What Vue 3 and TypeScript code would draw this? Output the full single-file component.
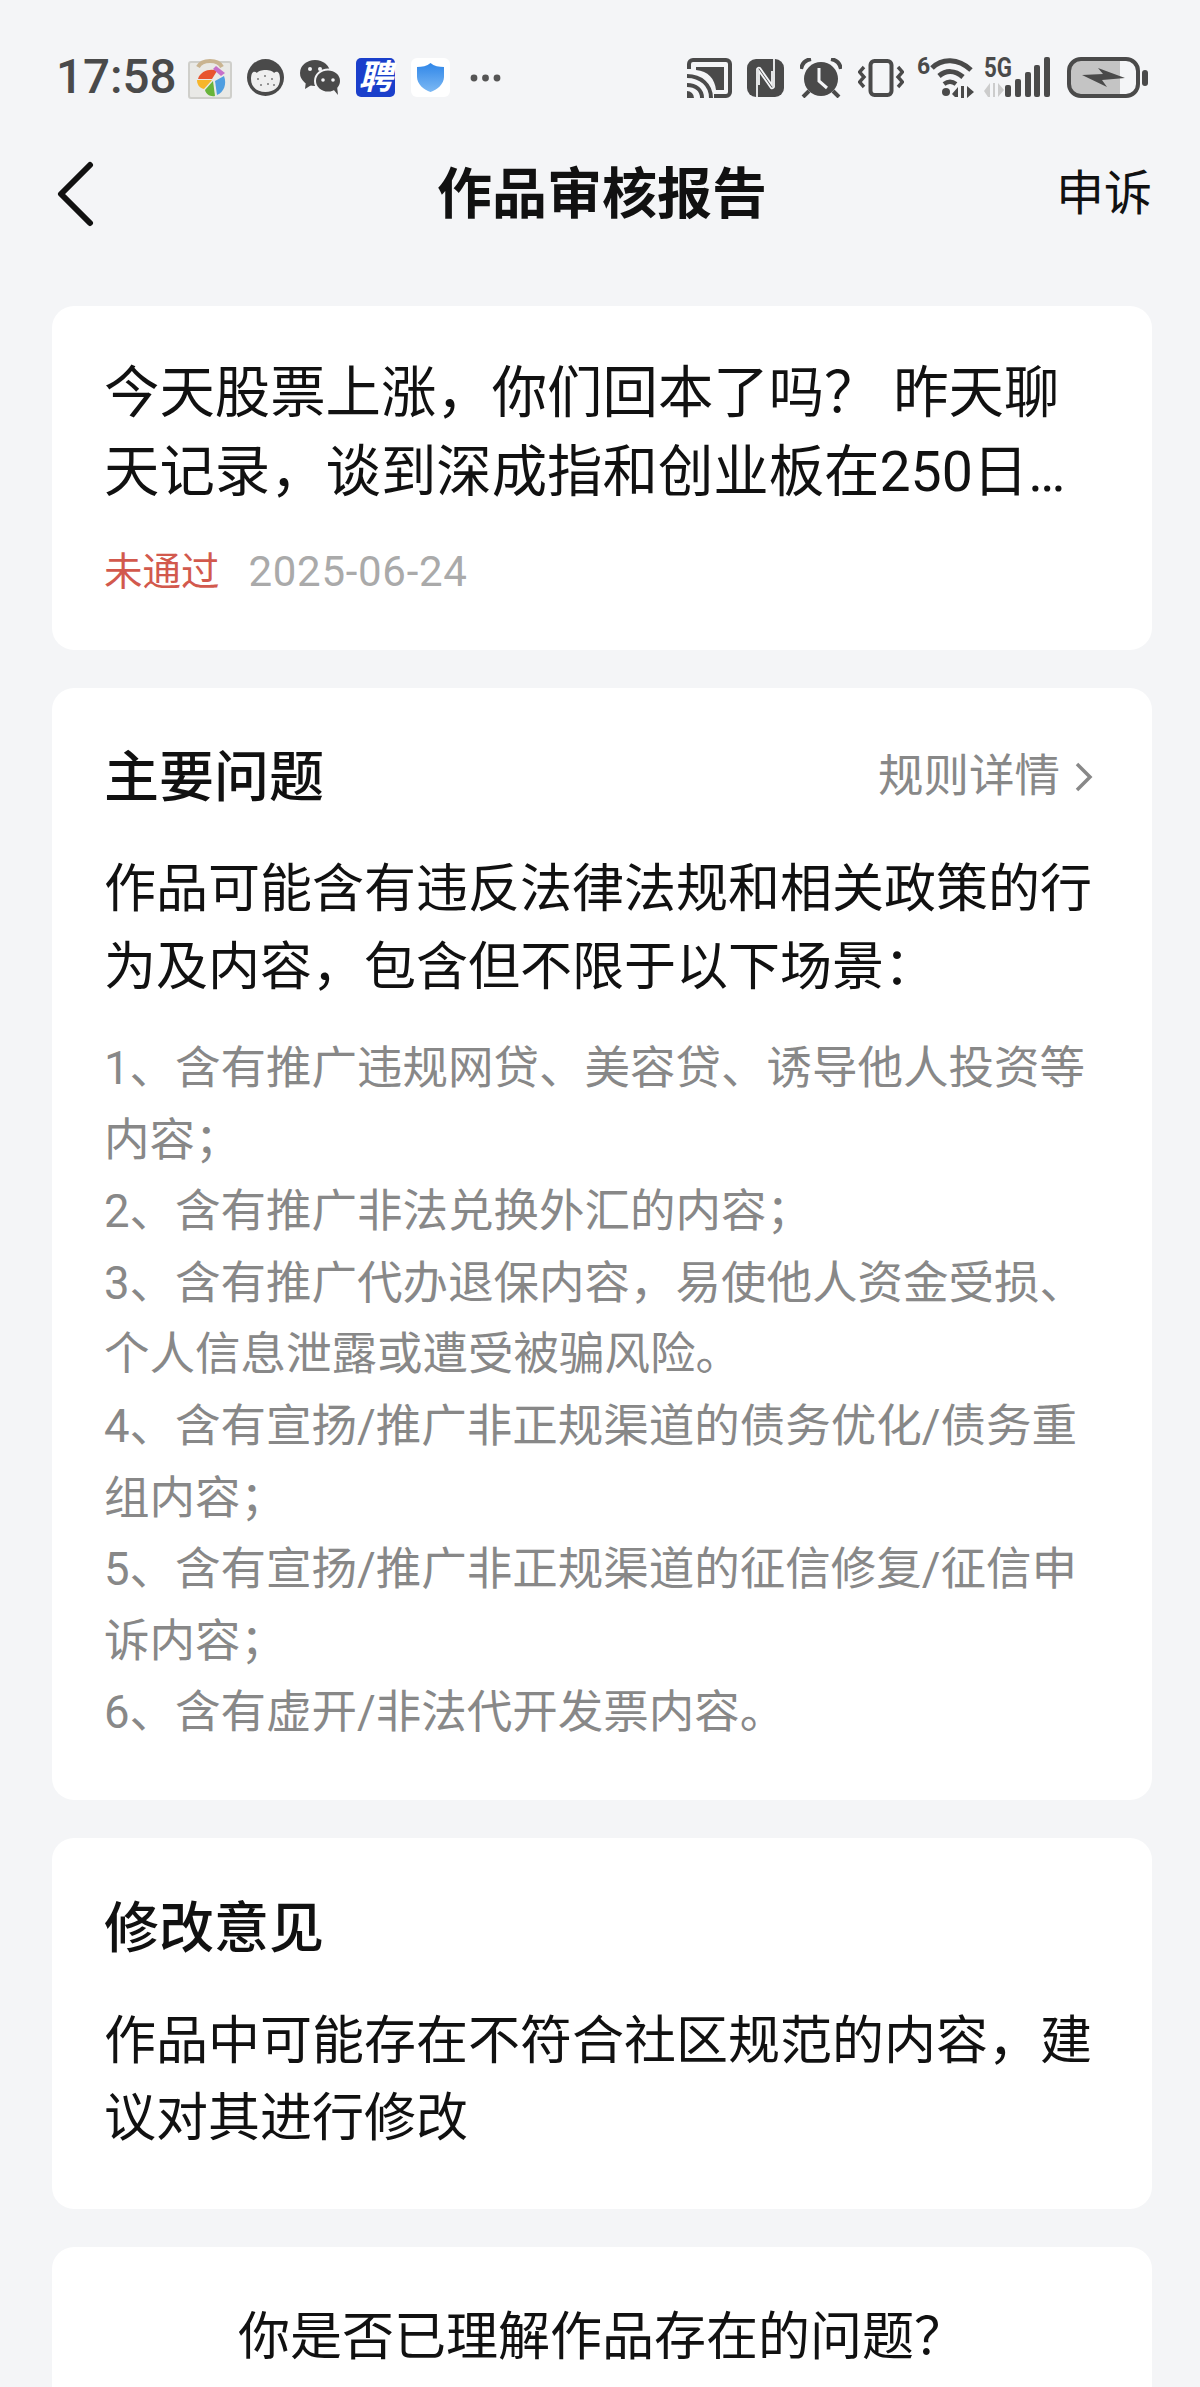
<script setup lang="ts">
// full-width punctuation is written as escapes so it survives as U+FF0C etc.
const rules = [
  '1、含有推广违规网贷、美容贷、诱导他人投资等内容\uFF1B',
  '2、含有推广非法兑换外汇的内容\uFF1B',
  '3、含有推广代办退保内容\uFF0C易使他人资金受损、个人信息泄露或遭受被骗风险。',
  '4、含有宣扬/推广非正规渠道的债务优化/债务重组内容\uFF1B',
  '5、含有宣扬/推广非正规渠道的征信修复/征信申诉内容\uFF1B',
  '6、含有虚开/非法代开发票内容。',
]
const workTitle = '今天股票上涨\uFF0C你们回本了吗\uFF1F 昨天聊天记录\uFF0C谈到深成指和创业板在250日…'
const issueIntro = '作品可能含有违反法律法规和相关政策的行为及内容\uFF0C包含但不限于以下场景\uFF1A'
const advice = '作品中可能存在不符合社区规范的内容\uFF0C建议对其进行修改'
const question = '你是否已理解作品存在的问题\uFF1F'
</script>

<template>
  <div class="page">
    <div class="status">
      <div class="status__left">
        <span class="status__time">17:58</span>
        <svg class="ic-bag" width="44" height="43" viewBox="0 0 44 43">
          <rect x="1" y="6" width="42" height="36" rx="2" fill="#e9e9e6" stroke="#cfcfcb" stroke-width="2" />
          <path d="M10 11 C14 3 30 3 34 11" fill="none" stroke="#c9b491" stroke-width="4" />
          <path d="M10 23 C12 15 23 12 29 15 L24 23Z" fill="#e8542f" />
          <path d="M9 24 L24 24 L16 33 C11 32 9 28 9 24Z" fill="#f6b52a" />
          <path d="M17 34 L25 25 L27 40 C22 41 18 38 17 34Z" fill="#68b43a" />
          <path d="M29 39 L27 25 L36 20 C39 28 36 36 29 39Z" fill="#4f9ee0" />
          <path d="M25 13 L33 20 L37 17 L28 10Z" fill="#c66fc9" />
        </svg>
        <svg class="ic-face" width="37" height="37" viewBox="0 0 37 37">
          <circle cx="18.5" cy="18.5" r="18.5" fill="#4a4a4a" />
          <path d="M4 20 C4 13 7 11 10 14 C12 10 25 10 27 14 C30 11 33 13 33 20 C33 28 27 33 18.5 33 C10 33 4 28 4 20Z" fill="#efefef" />
          <g fill="#777">
            <circle cx="11" cy="20" r="1" /><circle cx="18" cy="17" r="1" /><circle cx="25" cy="20" r="1" />
            <circle cx="14" cy="26" r="1" /><circle cx="21" cy="25" r="1" /><circle cx="27" cy="26" r="1" />
          </g>
        </svg>
        <svg class="ic-wechat" width="41" height="35" viewBox="0 0 41 35">
          <ellipse cx="15" cy="13" rx="15" ry="13" fill="#4a4a4a" />
          <path d="M6 21 L5 29 L13 24Z" fill="#4a4a4a" />
          <circle cx="10" cy="9" r="2" fill="#f4f5f7" /><circle cx="20" cy="9" r="2" fill="#f4f5f7" />
          <ellipse cx="28" cy="21" rx="13" ry="11.5" fill="#4a4a4a" stroke="#f4f5f7" stroke-width="2" />
          <path d="M33 29 L38 35 L37 26Z" fill="#4a4a4a" />
          <circle cx="23" cy="20" r="1.8" fill="#f4f5f7" /><circle cx="33" cy="20" r="1.8" fill="#f4f5f7" />
        </svg>
        <span class="ic-ping">聘</span>
        <span class="ic-shield">
          <svg width="27" height="29" viewBox="0 0 27 29">
            <defs>
              <linearGradient id="sh" x1="0" y1="0" x2="0" y2="1">
                <stop offset="0" stop-color="#2f86e8" />
                <stop offset="1" stop-color="#7db9f4" />
              </linearGradient>
            </defs>
            <path d="M13.5 0 C17 3 22 4 27 4 V14 C27 21 20 27 13.5 29 C7 27 0 21 0 14 V4 C5 4 10 3 13.5 0Z" fill="url(#sh)" />
          </svg>
        </span>
        <svg class="ic-more" width="31" height="8" viewBox="0 0 31 8">
          <circle cx="4" cy="4" r="3.4" fill="#555" /><circle cx="15.5" cy="4" r="3.4" fill="#555" /><circle cx="27" cy="4" r="3.4" fill="#555" />
        </svg>
      </div>
      <div class="status__right">
        <svg width="45" height="40" viewBox="0 0 45 40">
          <path d="M2 11 V6 a4 4 0 0 1 4-4 h33 a4 4 0 0 1 4 4 v28 a4 4 0 0 1-4 4 H27" fill="none" stroke="#4a4a4a" stroke-width="4" />
          <path d="M9 9 H37 V32 H29 C28 21 21 13 9 12Z" fill="#4a4a4a" />
          <path d="M0 18 C14 18 24 27 24 40" fill="none" stroke="#4a4a4a" stroke-width="4" />
          <path d="M0 27 C9 27 15 32 15 40" fill="none" stroke="#4a4a4a" stroke-width="4" />
          <path d="M0 33 a7 7 0 0 1 7 7 H0Z" fill="#4a4a4a" />
        </svg>
        <svg class="ic-nfc" width="37" height="38" viewBox="0 0 37 38">
          <rect width="37" height="38" rx="9" fill="#4a4a4a" />
          <path d="M10 38 V10 a2 2 0 0 1 3-1 L25 26 V12 M27 0 V28 a2 2 0 0 1-3 1 L12 12 V26" fill="none" stroke="#f4f5f7" stroke-width="1.8" />
        </svg>
        <svg class="ic-alarm" width="42" height="40" viewBox="0 0 42 40">
          <circle cx="21" cy="21" r="17" fill="#4a4a4a" />
          <path d="M19 10 V23 L27 30" fill="none" stroke="#f4f5f7" stroke-width="3" />
          <path d="M1 11 C2 5 6 2 11 1" fill="none" stroke="#4a4a4a" stroke-width="4" />
          <path d="M41 11 C40 5 36 2 31 1" fill="none" stroke="#4a4a4a" stroke-width="4" />
          <path d="M9 33 L3 39 M33 33 L39 39" stroke="#4a4a4a" stroke-width="4" />
        </svg>
        <svg class="ic-vib" width="46" height="38" viewBox="0 0 46 38">
          <rect x="12.5" y="2" width="21" height="34" rx="4" fill="none" stroke="#4a4a4a" stroke-width="4" />
          <path d="M6 8 L1.5 13 L6 18 L1.5 23 L6 28" fill="none" stroke="#4a4a4a" stroke-width="3.4" />
          <path d="M40 8 L44.5 13 L40 18 L44.5 23 L40 28" fill="none" stroke="#4a4a4a" stroke-width="3.4" />
        </svg>
        <svg class="ic-wifi" width="58" height="49" viewBox="0 -4 58 49">
          <text x="0" y="17" class="ic-text" font-size="23">6</text>
          <path d="M15 11 C25 1 41 1 54 13" fill="none" stroke="#4a4a4a" stroke-width="5" />
          <path d="M22 19 C29 13 38 13 46 20" fill="none" stroke="#4a4a4a" stroke-width="5" />
          <path d="M27 27 C31 24 35 24 39 27" fill="none" stroke="#4a4a4a" stroke-width="4.5" />
          <circle cx="29" cy="35" r="4" fill="#4a4a4a" />
          <path d="M35 37 L41 30 V40 H38Z M44 29 H47 V41 H44Z M50 29 L57 35 L50 41Z" fill="#4a4a4a" />
        </svg>
        <svg class="ic-signal" width="66" height="53" viewBox="0 -6 66 53">
          <text x="0" y="20" class="ic-text" font-size="27" textLength="28" lengthAdjust="spacingAndGlyphs">5G</text>
          <path d="M0 34 L6 26 V40 H4Z M9 26 H11 V40 H9Z M14 26 L20 33 L14 40Z" fill="#cccccc" />
          <rect x="21" y="28" width="6" height="12" rx="2" fill="#4a4a4a" />
          <rect x="31" y="22" width="6" height="18" rx="2" fill="#4a4a4a" />
          <rect x="41" y="15" width="6" height="25" rx="2" fill="#4a4a4a" />
          <rect x="50" y="8" width="6" height="32" rx="2" fill="#4a4a4a" />
          <rect x="60" y="0" width="6" height="40" rx="2" fill="#4a4a4a" />
        </svg>
        <svg class="ic-batt" width="81" height="41" viewBox="0 0 81 41">
          <rect x="4" y="4" width="65" height="33" rx="8" fill="#c4c4c4" />
          <rect x="53" y="4" width="17" height="33" fill="#f4f5f7" />
          <rect x="2" y="2" width="69" height="37" rx="12" fill="none" stroke="#4a4a4a" stroke-width="4" />
          <path d="M15 18 L36 17 L31 11 L58 21 L35 23 L40 30 Z" fill="#4a4a4a" />
          <rect x="75" y="13" width="6" height="16" rx="3" fill="#4a4a4a" />
        </svg>
      </div>
    </div>

    <div class="nav">
      <svg class="nav__back" width="37" height="66" viewBox="0 0 37 66">
        <path d="M33 4 L4 33 L33 62" fill="none" stroke="#111" stroke-width="6" stroke-linecap="round" stroke-linejoin="round" />
      </svg>
      <div class="nav__title">作品审核报告</div>
      <div class="nav__action">申诉</div>
    </div>

    <div class="list">
      <section class="card card--work">
        <div class="work__title">{{ workTitle }}</div>
        <div class="work__meta">
          <span class="work__state">未通过</span>
          <span class="work__date">2025-06-24</span>
        </div>
      </section>

      <section class="card card--issue">
        <div class="card__head">
          <h2 class="card__title">主要问题</h2>
          <div class="card__link">
            规则详情
            <svg width="20" height="32" viewBox="0 0 20 32">
              <path d="M3 3 L16 16 L3 29" fill="none" stroke="#888" stroke-width="3.5" />
            </svg>
          </div>
        </div>
        <p class="card__body card__body--issue">{{ issueIntro }}</p>
        <div class="rules">
          <div v-for="r in rules" :key="r">{{ r }}</div>
        </div>
      </section>

      <section class="card card--advice">
        <h2 class="card__title">修改意见</h2>
        <p class="card__body card__body--advice">{{ advice }}</p>
      </section>

      <section class="card card--ask">
        <div class="ask">{{ question }}</div>
      </section>
    </div>
  </div>
</template>

<style scoped>
.page {
  width: 1200px;
  height: 2387px;
  overflow: hidden;
  background: #f4f5f7;
  color: #111;
  font-family: Roboto, "Noto Sans CJK SC", sans-serif;
}
.status {
  height: 55px;
  padding: 50px 52px 0 56px;
  display: flex;
  justify-content: space-between;
  align-items: center;
}
.status__left, .status__right { display: flex; align-items: center; }
.status__time {
  font-size: 47.5px;
  font-weight: 500;
  color: #4a4a4a;
  line-height: 55px;
  width: 132px;
}
.ic-face { margin-left: 15px; }
.ic-wechat { margin-left: 16px; }
.ic-ping {
  margin-left: 15px;
  width: 39px;
  height: 39px;
  border-radius: 5px;
  background: #1a3fcb;
  color: #fff;
  font-size: 34px;
  font-weight: 700;
  line-height: 39px;
  text-align: center;
  font-style: italic;
}
.ic-shield {
  margin-left: 16px;
  width: 39px;
  height: 39px;
  border-radius: 6px;
  background: #fff;
  display: flex;
  align-items: center;
  justify-content: center;
}
.ic-more { margin-left: 20px; }
.ic-nfc { margin-left: 15px; }
.ic-alarm { margin-left: 16px; }
.ic-vib { margin-left: 16px; }
.ic-wifi { margin-left: 13px; }
.ic-signal { margin-left: 9px; }
.ic-batt { margin-left: 17px; }
.ic-text { font-family: Roboto, sans-serif; font-weight: 700; fill: #4a4a4a; }
.nav {
  height: 178px;
  display: grid;
  grid-template-columns: 1fr auto 1fr;
  align-items: center;
  padding: 0 48px 0 52px;
}
.nav__back { margin-left: 5px; }
.nav__title {
  font-size: 55px;
  font-weight: 700;
  line-height: 66px;
}
.nav__action { justify-self: end; font-size: 48px; line-height: 60px; }
.list {
  padding: 23px 48px 0 52px;
  display: flex;
  flex-direction: column;
  gap: 38px;
}
.card { background: #fff; border-radius: 22px; }
.card--work { padding: 48px 48px 53px 52px; }
.card--issue { padding: 59px 58px 51px 52px; }
.card--advice { padding: 60px 48px 52px 52px; }
.card--ask { padding: 65px 0 0; height: 300px; text-align: center; }
.work__title { font-size: 55.4px; line-height: 79px; }
.work__meta { margin-top: 35px; display: flex; gap: 29px; line-height: 50px; }
.work__state { font-size: 38.5px; color: #d2594d; }
.work__date { font-size: 42px; color: #aaa; letter-spacing: 0.7px; }
.card__head { display: flex; justify-content: space-between; align-items: center; }
.card__title { margin: 0; font-size: 55px; font-weight: 500; line-height: 60px; }
.card__link {
  display: flex;
  align-items: center;
  gap: 14px;
  font-size: 45.5px;
  line-height: 60px;
  color: #888;
}
.card__body { margin: 0; font-size: 52px; }
.card__body--issue { margin-top: 44px; line-height: 78px; }
.card__body--advice { margin-top: 45px; line-height: 77px; }
.rules {
  margin-top: 26px;
  font-size: 45.5px;
  line-height: 71.6px;
  color: #888;
}
.ask { font-size: 52px; line-height: 52px; }
</style>
